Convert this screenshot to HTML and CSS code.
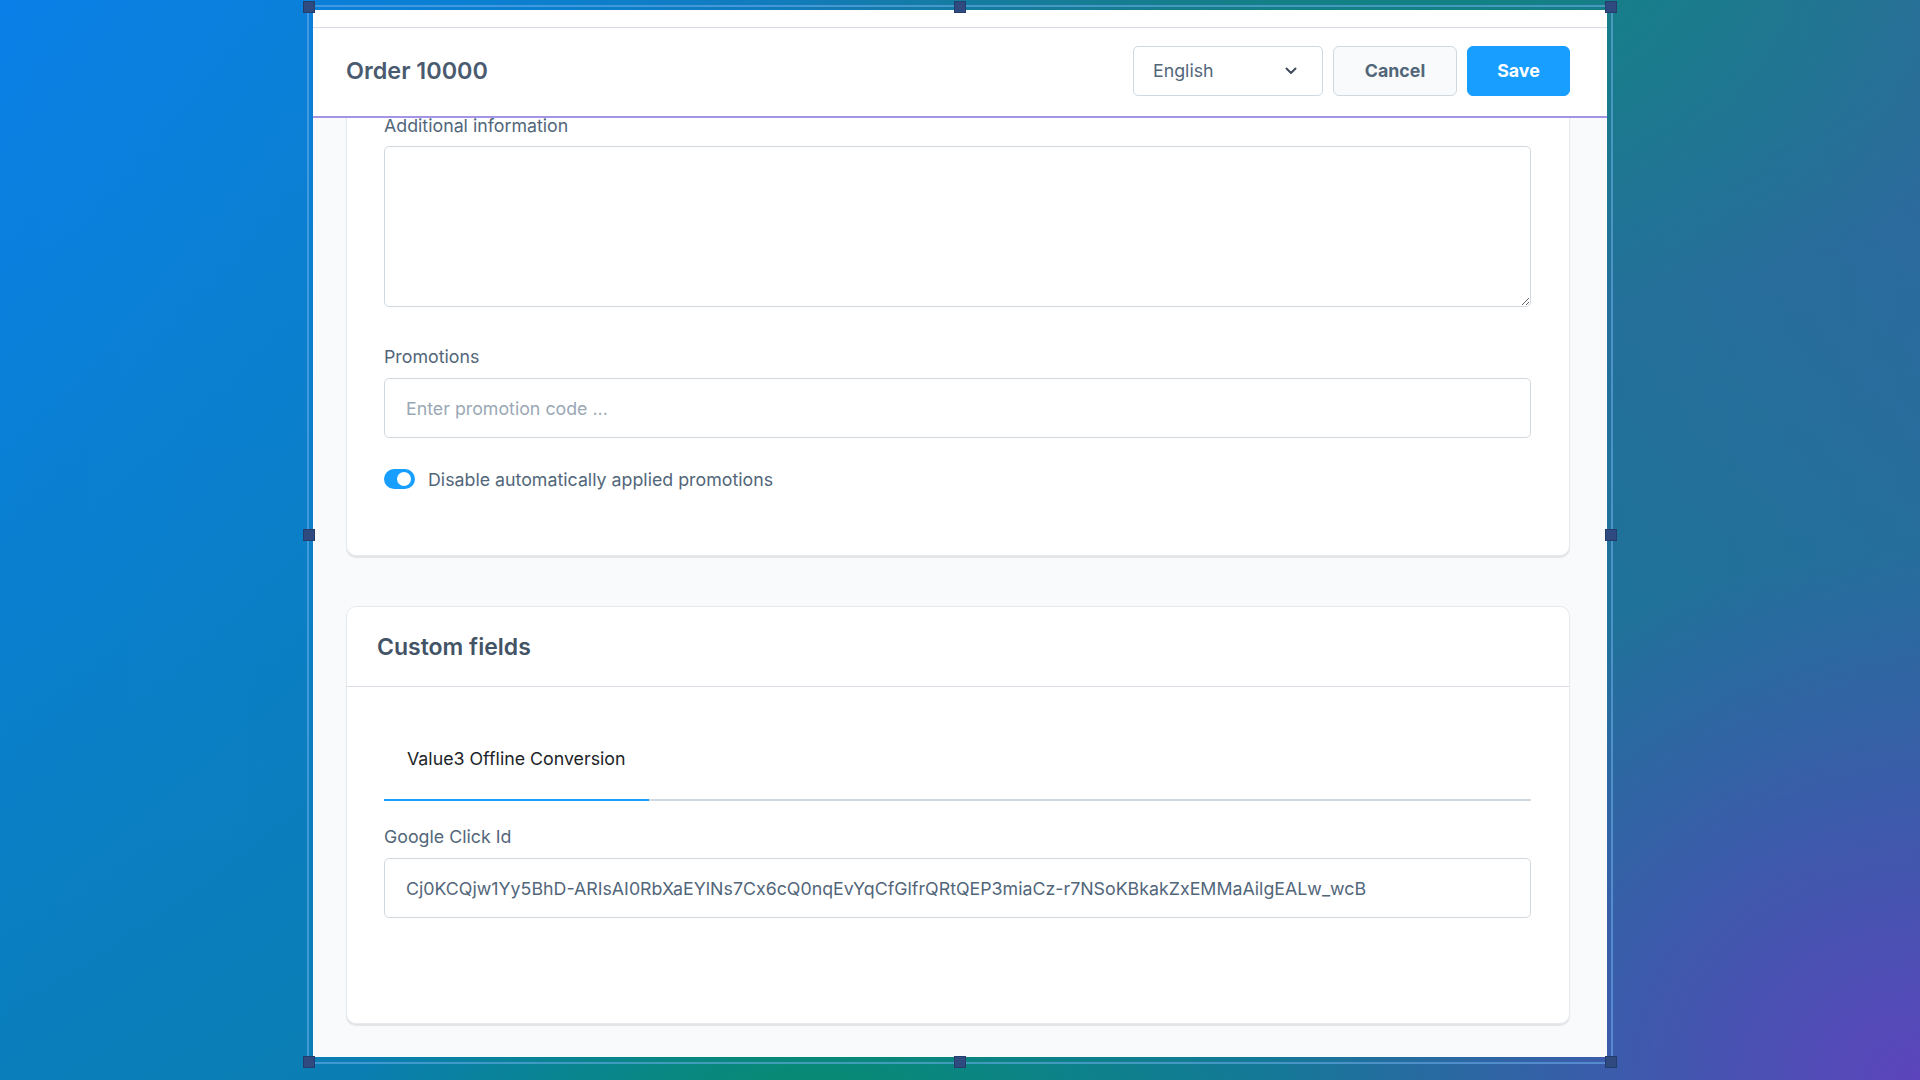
FILE: index.html
```html
<!DOCTYPE html>
<html lang="en">
<head>
<meta charset="utf-8">
<title>Order 10000</title>
<link rel="stylesheet" href="styles.css">
</head>
<body>
<div class="stage">
  <div class="panel">
    <div class="top-strip"></div>
    <header class="smart-bar">
      <h2 class="page-title">Order 10000</h2>
      <div class="actions">
        <div class="select">
          <span>English</span>
          <svg class="chevron" width="12" height="8" viewBox="0 0 12 8"><path d="M1.5 1.5 L6 6 L10.5 1.5" fill="none" stroke="#3f4d5d" stroke-width="2" stroke-linecap="round" stroke-linejoin="round"/></svg>
        </div>
        <button class="btn btn-default">Cancel</button>
        <button class="btn btn-primary">Save</button>
      </div>
    </header>
    <main class="content">
      <section class="card card-scrolled">
        <div class="card-body">
          <div class="field field-textarea">
            <label class="field-label field-label-first">Additional information</label>
            <textarea class="textarea"></textarea>
          </div>
          <div class="field">
            <label class="field-label">Promotions</label>
            <input class="input" type="text" placeholder="Enter promotion code ...">
          </div>
          <div class="switch-row">
            <span class="switch"><span class="knob"></span></span>
            <span class="switch-label">Disable automatically applied promotions</span>
          </div>
        </div>
      </section>
      <section class="card card-custom">
        <div class="card-header">
          <h3 class="card-title">Custom fields</h3>
        </div>
        <div class="card-body card-body-custom">
          <div class="tabs">
            <div class="tab tab-active">Value3 Offline Conversion</div>
          </div>
          <div class="field field-gclid">
            <label class="field-label">Google Click Id</label>
            <input class="input input-filled" type="text" value="Cj0KCQjw1Yy5BhD-ARIsAI0RbXaEYlNs7Cx6cQ0nqEvYqCfGlfrQRtQEP3miaCz-r7NSoKBkakZxEMMaAilgEALw_wcB">
          </div>
        </div>
      </section>
    </main>
  </div>
  <div class="frame">
    <span class="handle h-tl"></span>
    <span class="handle h-tm"></span>
    <span class="handle h-tr"></span>
    <span class="handle h-ml"></span>
    <span class="handle h-mr"></span>
    <span class="handle h-bl"></span>
    <span class="handle h-bm"></span>
    <span class="handle h-br"></span>
  </div>
</div>
</body>
</html>
```

FILE: styles.css
```css
* { box-sizing: border-box; }

html, body {
  margin: 0;
  padding: 0;
  width: 1920px;
  height: 1080px;
  overflow: hidden;
}

body {
  font-family: "Inter", "Noto Sans", "Liberation Sans", sans-serif;
  font-size: 17.8px;
  color: #52667a;
  background:
    radial-gradient(ellipse 820px 660px at 100% 100%, rgba(92, 68, 188, 1), rgba(92, 68, 188, 0) 80%),
    radial-gradient(ellipse 620px 330px at 42% 104%, rgba(6, 140, 106, 1), rgba(6, 140, 106, 0) 75%),
    radial-gradient(ellipse 900px 500px at 75% -5%, rgba(14, 134, 128, 0.95), rgba(14, 134, 128, 0) 75%),
    linear-gradient(180deg, rgba(10, 125, 150, 0) 0%, rgba(10, 125, 150, 0.55) 100%),
    linear-gradient(90deg, #0a80e8 0%, #0c7fcc 30%, #1f7498 65%, #30689e 100%);
}

.stage {
  position: relative;
  width: 1920px;
  height: 1080px;
  padding-top: 10px;
  padding-left: 313px;
}

.panel {
  width: 1294px;
  height: 1047px;
  background: #f9fafb;
  display: flex;
  flex-direction: column;
}

.top-strip {
  height: 18px;
  background: #ffffff;
  border-bottom: 1px solid #d9dce6;
  flex: none;
}

.smart-bar {
  flex: none;
  height: 90px;
  background: #ffffff;
  border-bottom: 2px solid #a394e6;
  display: flex;
  align-items: center;
  justify-content: space-between;
  padding: 0 37px 3px 33px;
  position: relative;
  z-index: 2;
}

.page-title {
  margin: 0;
  font-size: 23.4px;
  font-weight: 600;
  color: #4b5b6f;
}

.actions {
  display: flex;
  align-items: center;
  gap: 10px;
}

.select {
  width: 190px;
  height: 50px;
  border: 1px solid #d1d9e0;
  border-radius: 5px;
  background: #ffffff;
  display: flex;
  align-items: center;
  justify-content: space-between;
  padding: 0 25px 0 19px;
  font-size: 17.8px;
  color: #52667a;
}

.chevron { display: block; }

.btn {
  height: 50px;
  border-radius: 6px;
  font-family: inherit;
  font-size: 17.8px;
  font-weight: 700;
  padding: 0;
  cursor: pointer;
}

.btn-default {
  background: #f9fafb;
  border: 1px solid #d1d9e0;
  color: #52667a;
  width: 124px;
}

.btn-primary {
  background: #189eff;
  border: 1px solid #189eff;
  color: #ffffff;
  width: 103px;
}

.content {
  flex: 1;
  overflow: hidden;
  padding: 0 37px 0 33px;
  background: #f9fafb;
}

.card {
  background: #ffffff;
  border: 1px solid #e6eaef;
  border-radius: 10px;
  box-shadow: 0 2px 1px rgba(0, 0, 0, 0.09);
}

.card-scrolled {
  margin-top: -38px;
}

.card-body {
  padding: 38px 38px 38px 37px;
}

.field-label {
  display: block;
  line-height: 24px;
  margin-bottom: 9px;
  color: #52667a;
}

.field-label-first {
  line-height: 14px;
  margin-bottom: 13px;
}

.field {
  margin-bottom: 29px;
}

.field-textarea {
  margin-bottom: 38px;
}

.textarea {
  display: block;
  width: 100%;
  height: 161px;
  border: 1px solid #d1d9e0;
  border-radius: 5px;
  background: #ffffff;
  font-family: inherit;
  font-size: 17.8px;
  padding: 14px 21px;
  margin: 0;
}

.input {
  display: block;
  width: 100%;
  height: 60px;
  border: 1px solid #d1d9e0;
  border-radius: 5px;
  background: #ffffff;
  font-family: inherit;
  font-size: 17.8px;
  color: #52667a;
  padding: 0 21px;
  margin: 0;
  outline: none;
}

.input::placeholder {
  color: #9aa8b5;
  opacity: 1;
}

.switch-row {
  display: flex;
  align-items: center;
  height: 24px;
  margin-bottom: 26px;
}

.switch {
  position: relative;
  width: 31px;
  height: 20px;
  border-radius: 10px;
  background: #189eff;
  flex: none;
}

.knob {
  position: absolute;
  top: 3px;
  right: 4px;
  width: 14px;
  height: 14px;
  border-radius: 50%;
  background: #ffffff;
}

.switch-label {
  margin-left: 13px;
  color: #52667a;
}

.card-custom {
  margin-top: 50px;
}

.card-header {
  height: 80px;
  border-bottom: 1px solid #d9dfe5;
  display: flex;
  align-items: center;
  padding: 0 30px;
}

.card-title {
  margin: 0;
  font-size: 23px;
  font-weight: 600;
  color: #435366;
}

.card-body-custom {
  padding-bottom: 105px;
}

.tabs {
  display: flex;
  border-bottom: 2px solid #d1d9e0;
}

.tab {
  padding: 22px 23px 28px;
  line-height: 24px;
  color: #202428;
  margin-bottom: -2px;
}

.tab-active {
  border-bottom: 2px solid #189eff;
}

.field-gclid {
  margin-top: 24px;
  margin-bottom: 0;
}

.input-filled {
  color: #52667a;
}

.frame {
  position: absolute;
  left: 307px;
  top: 5px;
  width: 1306px;
  height: 1059px;
  border: 2px solid rgba(110, 175, 235, 0.55);
  pointer-events: none;
}

.handle {
  position: absolute;
  width: 12px;
  height: 12px;
  background: #2f4a7f;
  border: 1px solid #243d6c;
}

.h-tl { left: -6px; top: -6px; }
.h-tm { left: calc(50% - 6px); top: -6px; }
.h-tr { right: -6px; top: -6px; }
.h-ml { left: -6px; top: calc(50% - 6px); }
.h-mr { right: -6px; top: calc(50% - 6px); }
.h-bl { left: -6px; bottom: -6px; }
.h-bm { left: calc(50% - 6px); bottom: -6px; }
.h-br { right: -6px; bottom: -6px; }
```
